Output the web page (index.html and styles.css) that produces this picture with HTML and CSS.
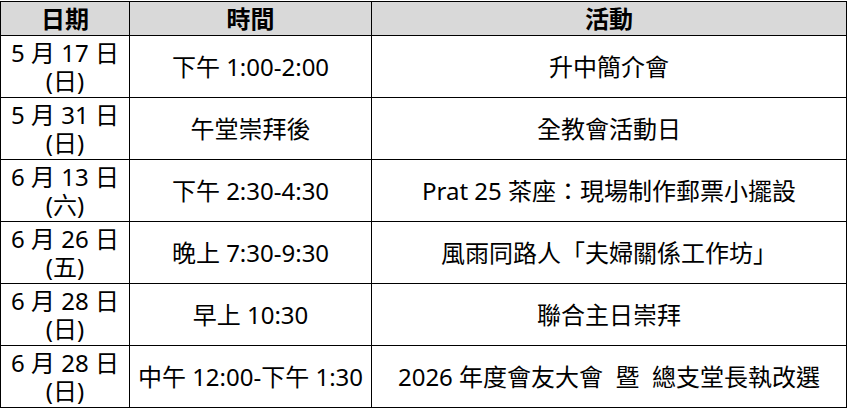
FILE: index.html
```html
<!DOCTYPE html>
<html lang="zh-Hant">
<head>
<meta charset="utf-8">
<link rel="stylesheet" href="styles.css">
</head>
<body>
<table class="schedule">
  <colgroup>
    <col class="c-date">
    <col class="c-time">
    <col class="c-act">
  </colgroup>
  <thead>
    <tr class="head-row">
      <th>日期</th>
      <th>時間</th>
      <th>活動</th>
    </tr>
  </thead>
  <tbody>
    <tr>
      <td>5 月 17 日<br>(日)</td>
      <td>下午 1:00-2:00</td>
      <td>升中簡介會</td>
    </tr>
    <tr>
      <td>5 月 31 日<br>(日)</td>
      <td>午堂崇拜後</td>
      <td>全教會活動日</td>
    </tr>
    <tr>
      <td>6 月 13 日<br>(六)</td>
      <td>下午 2:30-4:30</td>
      <td>Prat 25 茶座：現場制作郵票小擺設</td>
    </tr>
    <tr>
      <td>6 月 26 日<br>(五)</td>
      <td>晚上 7:30-9:30</td>
      <td>風雨同路人「夫婦關係工作坊」</td>
    </tr>
    <tr>
      <td>6 月 28 日<br>(日)</td>
      <td>早上 10:30</td>
      <td>聯合主日崇拜</td>
    </tr>
    <tr>
      <td>6 月 28 日<br>(日)</td>
      <td>中午 12:00-下午 1:30</td>
      <td>2026 年度會友大會&nbsp; 暨&nbsp; 總支堂長執改選</td>
    </tr>
  </tbody>
</table>
</body>
</html>
```
FILE: styles.css
```css
html, body {
  margin: 0;
  padding: 0;
  background: #ffffff;
}
body {
  padding-top: 1px;
  font-family: "Noto Sans", "Noto Sans CJK TC", sans-serif;
  color: #000000;
}
.schedule {
  border-collapse: collapse;
  table-layout: fixed;
  width: 846px;
}
.c-date { width: 129px; }
.c-time { width: 242px; }
.c-act { width: 475px; }
.schedule th,
.schedule td {
  border: 1px solid #000000;
  text-align: center;
  vertical-align: middle;
  padding: 0;
  font-size: 24px;
  line-height: 28px;
  white-space: nowrap;
}
.head-row th {
  background: #d9d9d9;
  font-weight: bold;
  height: 33px;
}
.schedule tbody td {
  height: 61px;
}
```
